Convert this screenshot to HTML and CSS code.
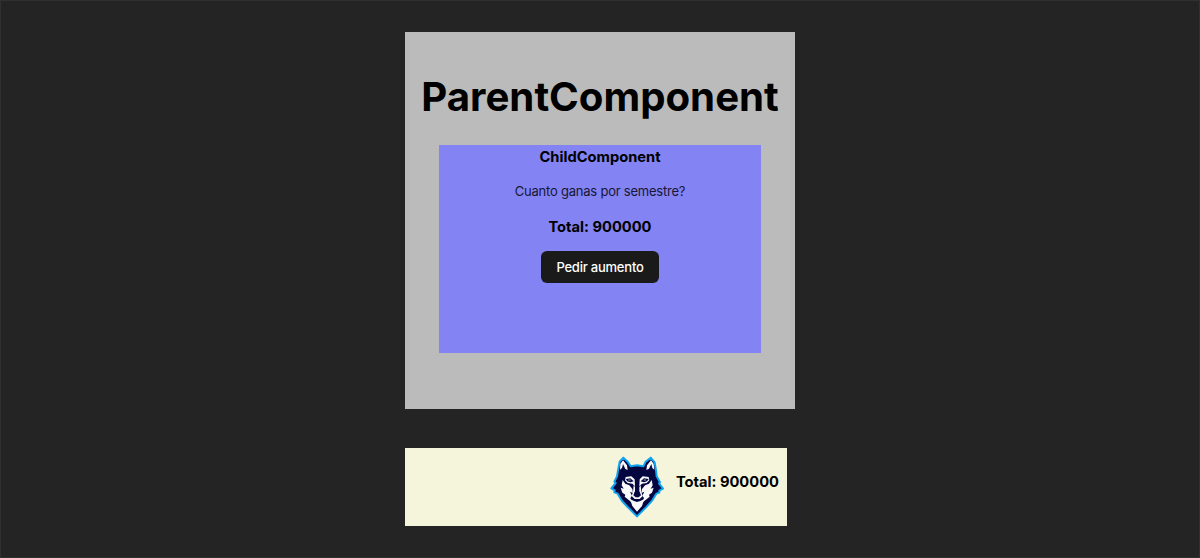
FILE: index.html
```html
<!DOCTYPE html>
<html lang="es">
<head>
<meta charset="utf-8">
<title>ParentComponent</title>
<link rel="stylesheet" href="styles.css">
</head>
<body>
<main class="app">
  <section class="parent">
    <h1 class="parent-title">ParentComponent</h1>
    <div class="child">
      <h3 class="child-title">ChildComponent</h3>
      <p class="question">Cuanto ganas por semestre?</p>
      <h3 class="total">Total: 900000</h3>
      <button class="raise" type="button">Pedir aumento</button>
    </div>
  </section>
  <footer class="footer">
    <svg class="wolf" viewBox="30 33 162 186" aria-hidden="true">
      <path fill="#050540" stroke="#10a4ef" stroke-width="6" stroke-linejoin="round" d="M70 38L59 50L54 76L51 94L43 110L47 114L34 130L44 136L43 142L53 146L66 168L83 186L111 214L138 187L157 166L169 146L178 143L178 137L189 131L177 115L180 112L170 94L168 76L164 52L152 38L137 50L130 64L111 61L92 64L83 50Z"/>
      <g fill="#f8f8fb">
        <path d="M69 46L61 57L60 74L66 69L69 57L76 72L83 75L81 61ZM153 46L141 61L139 75L147 71L154 57L157 69L163 74L161 56Z"/>
        <path d="M77 96L94 94L104 103L105 124L97 116L83 114L75 106ZM146 96L128 94L119 103L118 124L126 116L140 114L148 106Z"/>
        <path d="M68 105L65 121L71 131L62 128L67 143L76 149L74 155L90 168L96 173L91 159L96 152L90 140L99 144L97 132L88 121L76 116ZM155 105L158 121L152 131L161 128L156 143L147 149L149 155L133 168L127 173L132 159L127 152L133 140L124 144L126 132L135 121L147 116Z"/>
        <path d="M101 121L105 126L105 139L100 151L107 157H116L123 151L118 139L118 126L122 121L124 141L128 153L119 162H104L95 153L99 141Z"/>
        <path d="M90 162L102 168L111 171L121 168L133 162L126 183L111 200L97 183Z"/>
      </g>
      <g fill="#050540">
        <path d="M77 102L91 100L101 109L91 112L82 109ZM146 102L132 100L122 109L132 112L141 109Z"/>
        <path d="M104 142L119 142L121 151L112 157L102 151Z"/>
      </g>
      <path fill="none" stroke="#f8f8fb" stroke-width="2" d="M85 105H92M131 105H138"/>
    </svg>
    <h3 class="total">Total: 900000</h3>
  </footer>
</main>
</body>
</html>
```
FILE: styles.css
```css
body {
  margin: 0;
  min-height: 558px;
  box-sizing: border-box;
  background: #242424;
  border: 1px solid #303030;
  color: #000;
  font-family: Inter, "Liberation Sans", sans-serif;
  text-align: center;
}
.app {
  width: 390px;
  margin: 31px auto 0;
}
.parent {
  box-sizing: border-box;
  height: 377px;
  padding: 42px 0 0;
  background: #bbb;
}
.parent-title {
  margin: 0 0 26px;
  font-size: 40.2px;
  line-height: 45px;
  font-weight: 700;
  white-space: nowrap;
}
.child {
  box-sizing: border-box;
  width: 322px;
  height: 208px;
  margin: 0 auto;
  padding-top: 1px;
  background: #8383f3;
}
.child-title,
.total {
  margin: 0;
  font-size: 14.7px;
  line-height: 23px;
  font-weight: 700;
}
.question {
  margin: 12px 0 15px;
  font-size: 13px;
  letter-spacing: -0.22px;
  line-height: 20px;
  color: #171735;
}
.raise {
  display: block;
  width: 118px;
  height: 32px;
  margin: 12px auto 0;
  padding: 0;
  border: 0;
  border-radius: 6px;
  background: #1a1a1a;
  color: #fff;
  font-family: inherit;
  font-size: 13px;
  letter-spacing: -0.22px;
  font-weight: 500;
}
.footer {
  display: flex;
  justify-content: flex-end;
  box-sizing: border-box;
  width: 382px;
  height: 78px;
  margin-top: 39px;
  padding: 8px 8px 0 0;
  gap: 12px;
  background: #f5f5dc;
}
.footer .total {
  margin-top: 15px;
}
.wolf {
  width: 54px;
  height: 62px;
}
```
